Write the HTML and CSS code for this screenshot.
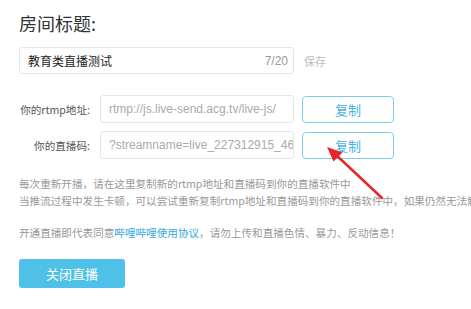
FILE: index.html
```html
<!DOCTYPE html>
<html lang="zh-CN">
<head>
  <meta charset="UTF-8">
  <title>直播设置</title>
  <link rel="stylesheet" href="styles.css">
</head>
<body>
  <div class="page">
    <h1 class="room-title">房间标题:</h1>

    <div class="title-row">
      <div class="title-input">
        <span class="title-text">教育类直播测试</span>
        <span class="counter">7/20</span>
      </div>
      <span class="save">保存</span>
    </div>

    <div class="field">
      <span class="label">你的rtmp地址:</span>
      <div class="value">rtmp://js.live-send.acg.tv/live-js/</div>
      <button class="copy-button">复制</button>
    </div>

    <div class="field">
      <span class="label">你的直播码:</span>
      <div class="value">?streamname=live_227312915_4685637&amp;key=</div>
      <button class="copy-button">复制</button>
    </div>

    <div class="notes">
      <p>每次重新开播，请在这里复制新的rtmp地址和直播码到你的直播软件中</p>
      <p>当推流过程中发生卡顿，可以尝试重新复制rtmp地址和直播码到你的直播软件中，如果仍然无法解决请联系客服</p>
    </div>

    <p class="agreement">开通直播即代表同意<a href="#">哔哩哔哩使用协议</a>，请勿上传和直播色情、暴力、反动信息！</p>

    <button class="close-button">关闭直播</button>

    <!-- red arrow pointing at the second copy button -->
    <svg class="arrow" width="471" height="309" viewBox="0 0 471 309">
      <line x1="382" y1="198" x2="334" y2="153" stroke="#e8262a" stroke-width="2.5" stroke-linecap="round"/>
      <polygon points="327,147 333.5,161.5 342.5,152.5" fill="#e8262a"/>
    </svg>
  </div>
</body>
</html>
```

FILE: styles.css
```css
* { box-sizing: border-box; margin: 0; padding: 0; }
html, body {
  width: 100%; height: 100%;
  background: #fff;
  overflow: hidden;
  font-family: "Noto Sans CJK SC", "Liberation Sans", sans-serif;
  color: #444;
}

.page {
  position: relative;
  padding: 11px 0 0 19px;
}

/* Heading */
.room-title {
  font-size: 18px;
  font-weight: normal;
  line-height: 24px;
  color: #333;
}

/* Title input */
.title-row {
  display: flex;
  align-items: center;
  margin-top: 12px;
}
.title-input {
  width: 275px;
  height: 27px;
  display: flex;
  align-items: center;
  justify-content: space-between;
  padding: 0 5px 0 8px;
  border: 1px solid #e6e6e6;
  border-radius: 3px;
}
.title-text {
  font-size: 12px;
  color: #222;
}
.counter {
  font-family: "Liberation Sans", sans-serif;
  font-size: 12px;
  color: #999;
}
.save {
  margin-left: 10px;
  font-size: 11px;
  color: #bbb;
}

/* rtmp / stream code rows */
.field {
  display: flex;
  align-items: center;
  margin-top: 21px;
}
.field + .field {
  margin-top: 8px;
}
.label {
  flex: 0 0 71px;
  display: flex;
  justify-content: flex-end;
  margin-right: 10px;
  white-space: nowrap;
  font-size: 10.6px;
  color: #555;
}
.value {
  width: 194px;
  height: 28px;
  line-height: 26px;
  padding: 0 8px;
  border: 1px solid #e6e6e6;
  border-radius: 3px;
  font-family: "Liberation Sans", sans-serif;
  font-size: 12px;
  color: #aaa;
  white-space: nowrap;
  overflow: hidden;
}
.copy-button {
  width: 92px;
  height: 27px;
  margin-left: 8px;
  background: #fff;
  border: 1px solid #7ccdf2;
  border-radius: 4px;
  font-family: inherit;
  font-size: 13px;
  color: #45b4e6;
  cursor: pointer;
}

/* Help text */
.notes {
  margin-top: 16px;
  font-size: 10.6px;
  line-height: 17px;
  color: #999;
  white-space: nowrap;
}
.agreement {
  margin-top: 15px;
  font-size: 10.6px;
  line-height: 17px;
  color: #999;
  white-space: nowrap;
}
.agreement a {
  color: #3aa8e0;
  text-decoration: none;
}

/* Close button */
.close-button {
  display: block;
  width: 106px;
  height: 29px;
  margin-top: 18px;
  background: #4fc1e9;
  border: none;
  border-radius: 3px;
  font-family: inherit;
  font-size: 13px;
  color: #fff;
  cursor: pointer;
}

/* Annotation overlay */
.arrow {
  position: absolute;
  left: 0;
  top: 0;
  pointer-events: none;
}
```
